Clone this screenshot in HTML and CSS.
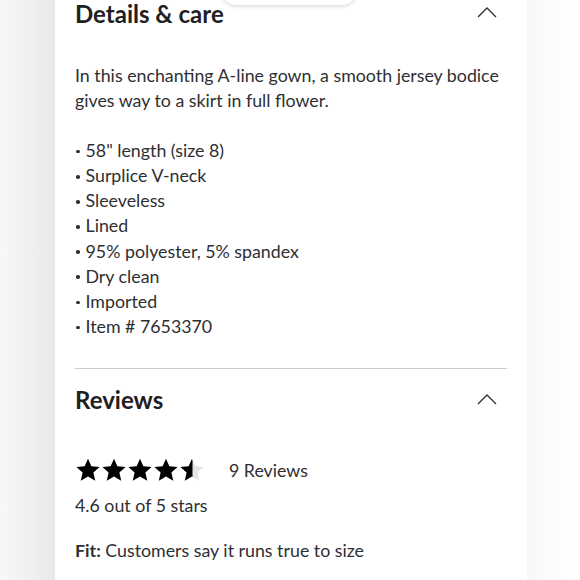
FILE: index.html
```html
<!DOCTYPE html>
<html>
<head>
<meta charset="utf-8">
<link rel="stylesheet" href="styles.css">
</head>
<body>
<div class="page">
  <div class="side-left"></div>
  <main class="card">
    <section class="section">
      <div class="sec-head">
        <h2 class="sec-title">Details &amp; care</h2>
        <svg class="chev" width="20" height="12" viewBox="0 0 20 12"><polyline points="1,11 10,2 19,11" fill="none" stroke="#2e2f32" stroke-width="1.3"/></svg>
      </div>
      <div class="details">
        <p class="desc">In this enchanting A-line gown, a smooth jersey bodice gives way to a skirt in full flower.</p>
        <ul class="bullets">
          <li>58" length (size 8)</li>
          <li>Surplice V-neck</li>
          <li>Sleeveless</li>
          <li>Lined</li>
          <li>95% polyester, 5% spandex</li>
          <li>Dry clean</li>
          <li>Imported</li>
          <li>Item # 7653370</li>
        </ul>
      </div>
    </section>
    <hr class="divider">
    <section class="section">
      <div class="sec-head sec-head-rev">
        <h2 class="sec-title">Reviews</h2>
        <svg class="chev" width="20" height="12" viewBox="0 0 20 12"><polyline points="1,11 10,2 19,11" fill="none" stroke="#2e2f32" stroke-width="1.3"/></svg>
      </div>
      <div class="rating-row">
        <div class="stars">
          <svg width="132" height="26" viewBox="0 0 132 26">
            <defs>
              <clipPath id="half"><rect x="104" y="0" width="13.5" height="26"/></clipPath>
            </defs>
            <g fill="#000">
              <path d="M13 0.8 L16.4 8.3 L24.6 9.1 L18.4 14.6 L20.2 22.8 L13 18.5 L5.8 22.8 L7.6 14.6 L1.4 9.1 L9.6 8.3 Z"/>
              <path transform="translate(26 0)" d="M13 0.8 L16.4 8.3 L24.6 9.1 L18.4 14.6 L20.2 22.8 L13 18.5 L5.8 22.8 L7.6 14.6 L1.4 9.1 L9.6 8.3 Z"/>
              <path transform="translate(52 0)" d="M13 0.8 L16.4 8.3 L24.6 9.1 L18.4 14.6 L20.2 22.8 L13 18.5 L5.8 22.8 L7.6 14.6 L1.4 9.1 L9.6 8.3 Z"/>
              <path transform="translate(78 0)" d="M13 0.8 L16.4 8.3 L24.6 9.1 L18.4 14.6 L20.2 22.8 L13 18.5 L5.8 22.8 L7.6 14.6 L1.4 9.1 L9.6 8.3 Z"/>
            </g>
            <path fill="#e3e6e9" transform="translate(104 0)" d="M13 0.8 L16.4 8.3 L24.6 9.1 L18.4 14.6 L20.2 22.8 L13 18.5 L5.8 22.8 L7.6 14.6 L1.4 9.1 L9.6 8.3 Z"/>
            <g clip-path="url(#half)">
              <path fill="#000" transform="translate(104 0)" d="M13 0.8 L16.4 8.3 L24.6 9.1 L18.4 14.6 L20.2 22.8 L13 18.5 L5.8 22.8 L7.6 14.6 L1.4 9.1 L9.6 8.3 Z"/>
            </g>
          </svg>
        </div>
        <span class="count">9 Reviews</span>
      </div>
      <p class="avg">4.6 out of 5 stars</p>
      <p class="fit"><b>Fit:</b> Customers say it runs true to size</p>
    </section>
  </main>
  <div class="side-right"></div>
</div>
<div class="pill"></div>
</body>
</html>
```

FILE: styles.css
```css
* { box-sizing: border-box; }
html, body {
  margin: 0;
  padding: 0;
  height: 100%;
  overflow: hidden;
}
body {
  font-family: Lato, "Open Sans", sans-serif;
  color: #2e2f32;
  background: #fff;
}
.page {
  display: grid;
  grid-template-columns: 55px 472px 1fr;
  height: 580px;
}
.side-left {
  background: linear-gradient(to right, #f8f8f8 0%, #f1f1f1 50%, #e9e9e9 100%);
}
.side-right {
  background: linear-gradient(to right, #f7f7f7 0%, #fcfcfc 40%, #ffffff 100%);
}
.card {
  background: #fff;
  padding: 0 20px 0 20px;
}
.sec-head {
  display: flex;
  justify-content: space-between;
  align-items: flex-start;
  padding-top: 1px;
}
.sec-title {
  margin: 0;
  font-size: 24px;
  line-height: 26px;
  font-weight: 700;
  color: #1f2023;
}
.chev {
  margin-top: 5px;
  margin-right: 10px;
}
.details {
  margin-top: 36px;
  font-size: 17.8px;
  line-height: 25.1px;
}
.desc {
  margin: 0 0 25px 0;
}
.bullets {
  list-style: none;
  margin: 0;
  padding: 0;
}
.bullets li {
  display: flex;
  align-items: center;
}
.bullets li::before {
  content: "";
  width: 3.5px;
  height: 3.5px;
  border-radius: 50%;
  background: #2e2f32;
  margin: 2px 6px 0 1px;
  flex: none;
}
.divider {
  margin: 29px 0 0 0;
  border: 0;
  border-top: 1px solid #c9ccd0;
  height: 0;
}
.sec-head-rev {
  padding-top: 18px;
}
.sec-head-rev .chev {
  margin-top: 6px;
}
.rating-row {
  display: flex;
  align-items: center;
  gap: 22px;
  margin-top: 45px;
  height: 26px;
}
.stars svg { display: block; }
.count {
  font-size: 17.8px;
  line-height: 25px;
}
.avg {
  margin: 9px 0 0 0;
  font-size: 17.8px;
  line-height: 25px;
}
.fit {
  margin: 20px 0 0 0;
  font-size: 17.8px;
  line-height: 25px;
}
.fit b { font-weight: 700; }
.pill {
  position: absolute;
  top: -30px;
  left: 222px;
  width: 134px;
  height: 35px;
  background: #fff;
  border-radius: 14px;
  box-shadow: 0 1px 4px rgba(0,0,0,0.18);
}
```
